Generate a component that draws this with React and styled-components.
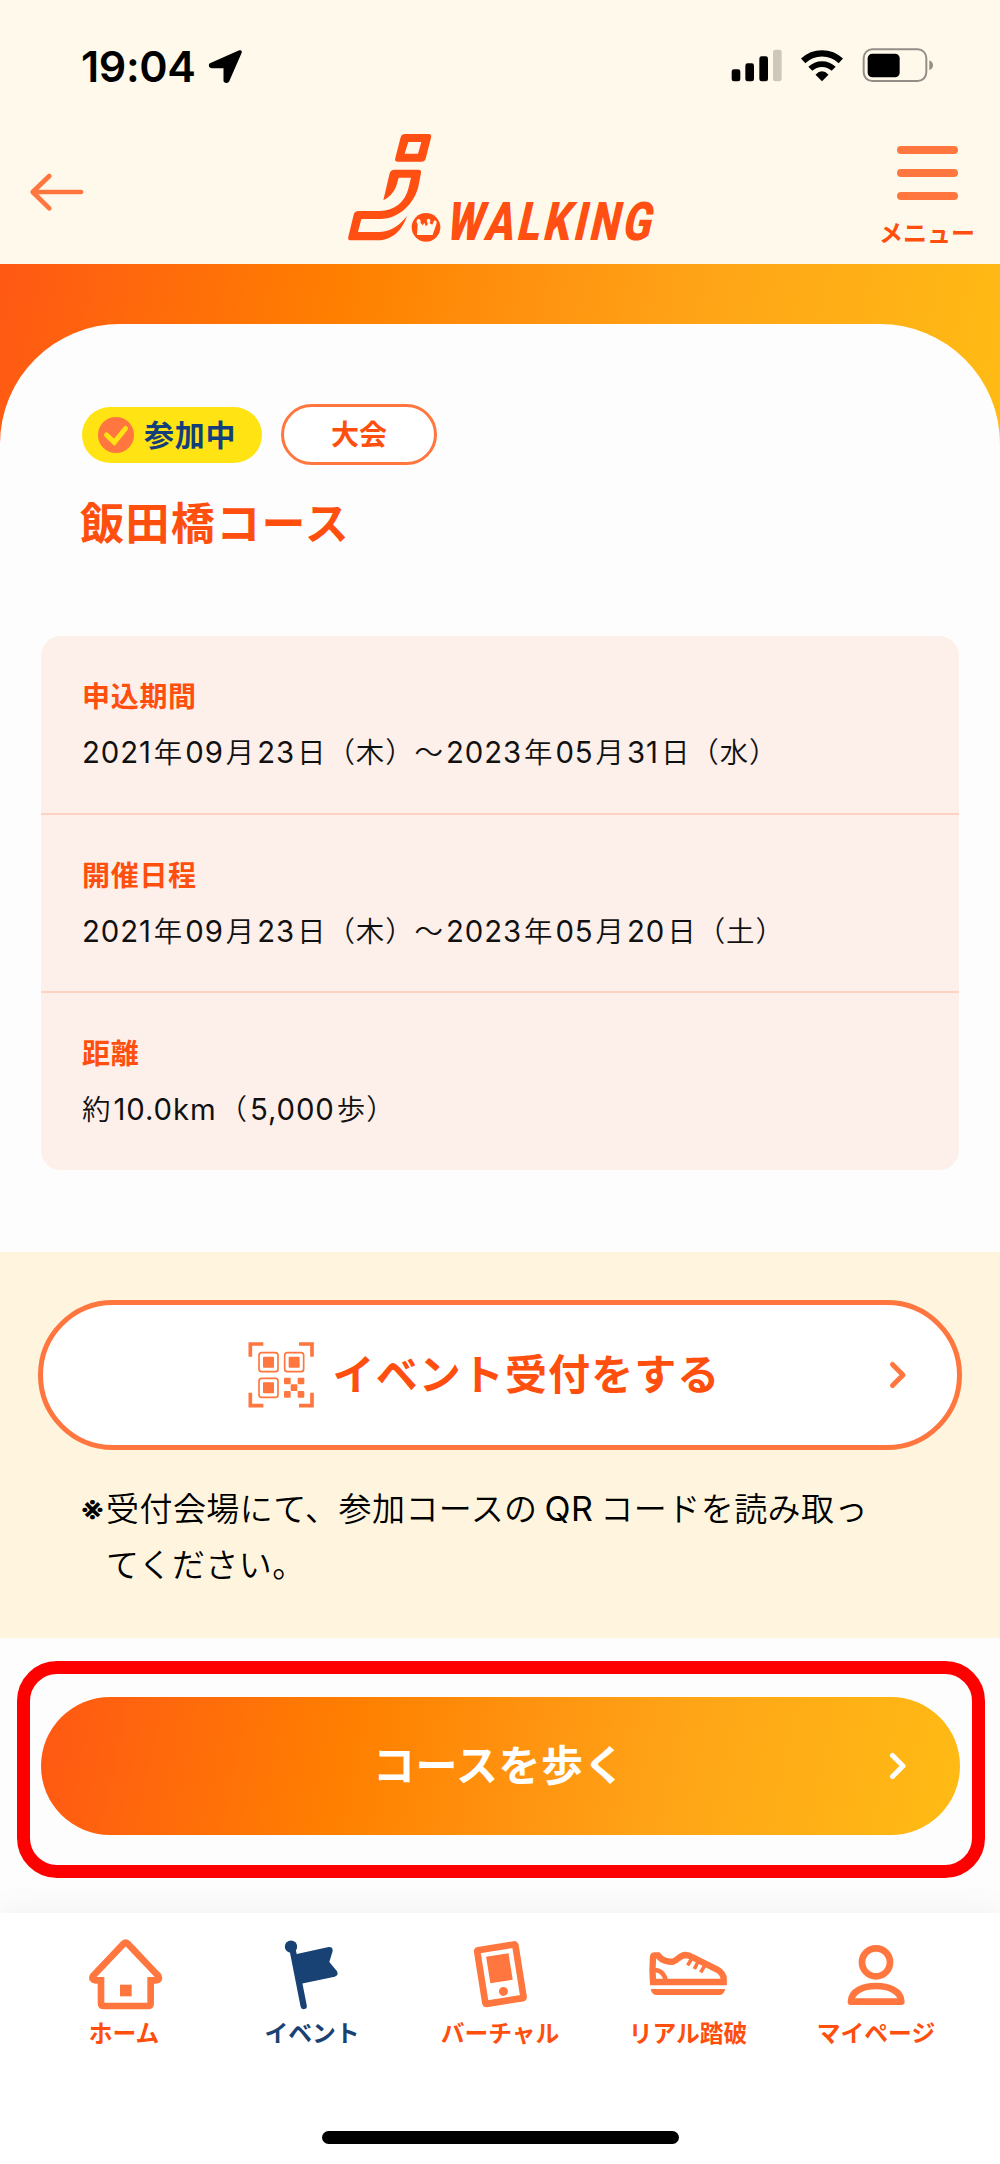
import React from "react";
import styled, { createGlobalStyle } from "styled-components";

const ORANGE = "#ff4f0f";
const SOFT_ORANGE = "#ff763f";
const NAVY = "#184274";
const GRADIENT = "linear-gradient(102deg, #ff5814 0%, #ff8000 34%, #ff9310 52%, #ffa617 70%, #ffbb14 100%)";

const GlobalStyle = createGlobalStyle`
  * { box-sizing: border-box; }
  body {
    margin: 0;
    background: #fdfdfd;
    font-family: Inter, "Noto Sans CJK JP", sans-serif;
    color: #111;
  }
  svg { display: block; flex: none; }
  button { font: inherit; cursor: pointer; }
`;

const Page = styled.div`
  width: 1000px;
  height: 2164px;
  display: flex;
  flex-direction: column;
  overflow: hidden;
`;

const TopArea = styled.div`
  height: 264px;
  flex: none;
  background: #fff9ec;
  display: flex;
  flex-direction: column;
`;

const StatusBar = styled.div`
  height: 132px;
  padding: 0 66px 0 81px;
  display: flex;
  align-items: center;
  justify-content: space-between;
  color: #000;
`;

const StatusGroup = styled.div`
  display: flex;
  align-items: center;
  gap: ${(p) => p.$gap}px;
`;

const Clock = styled.span`
  font-size: 43px;
  font-weight: 600;
  letter-spacing: -0.4px;
  line-height: 50px;
`;

const Header = styled.header`
  height: 132px;
  padding: 0 26px 0 28px;
  display: grid;
  grid-template-columns: 319px 1fr 94px;
`;

const BackButton = styled.button`
  border: 0;
  padding: 0;
  margin-top: 40px;
  width: 57px;
  height: 40px;
  background: none;
`;

const LogoArt = styled.svg`
  overflow: visible;
`;

const LogoText = styled.text`
  font-family: Roboto, sans-serif;
  font-weight: 900;
  font-size: 160px;
  letter-spacing: 13px;
`;

const MenuButton = styled.button`
  border: 0;
  padding: 14px 0 0;
  background: none;
  display: flex;
  flex-direction: column;
  align-items: center;
  color: ${ORANGE};
`;

const MenuLine = styled.span`
  width: 61px;
  height: 8px;
  border-radius: 4px;
  background: ${SOFT_ORANGE};
  margin-bottom: 15px;
`;

const MenuLabel = styled.span`
  font-size: 24px;
  font-weight: 700;
  line-height: 34px;
  margin-top: 2px;
  white-space: nowrap;
`;

const Hero = styled.div`
  height: 186px;
  flex: none;
  padding-top: 60px;
  background: ${GRADIENT};
`;

const HeroPanel = styled.div`
  height: 126px;
  padding: 80px 82px 0;
  border-radius: 120px 120px 0 0;
  background: #fdfdfd;
`;

const BadgeRow = styled.div`
  display: flex;
  align-items: center;
  gap: 19px;
`;

const JoinedBadge = styled.span`
  width: 180px;
  height: 56px;
  padding-left: 16px;
  border-radius: 28px;
  background: #ffe312;
  color: #123f7c;
  display: flex;
  align-items: center;
  gap: 10px;
  font-size: 30px;
  font-weight: 700;
  letter-spacing: 0.8px;
  line-height: 56px;
`;

const TypeBadge = styled.span`
  width: 156px;
  height: 61px;
  border: 3px solid ${SOFT_ORANGE};
  border-radius: 31px;
  background: #fff;
  color: ${ORANGE};
  text-align: center;
  font-size: 28px;
  font-weight: 700;
  line-height: 56px;
`;

const Title = styled.h1`
  margin: 0;
  padding: 44px 80px 0;
  height: 186px;
  flex: none;
  color: ${ORANGE};
  font-size: 44px;
  font-weight: 700;
  letter-spacing: 1.4px;
  line-height: 60px;
`;

const InfoCard = styled.dl`
  margin: 0 41px 82px;
  height: 534px;
  border-radius: 20px;
  background: #fdefea;
  flex: none;
`;

const InfoRow = styled.div`
  height: 178.5px;
  padding: 41px 41px 0;
  border-bottom: 2px solid #ffd1c2;
  &:last-child {
    border-bottom: 0;
  }
`;

const InfoLabel = styled.dt`
  color: ${ORANGE};
  font-size: 28px;
  font-weight: 700;
  letter-spacing: 0.7px;
  line-height: 40px;
`;

const InfoValue = styled.dd`
  margin: 16px 0 0;
  font-size: 28.5px;
  font-weight: 350;
  letter-spacing: 0.9px;
  line-height: 40px;
`;

const Latin = styled.span`
  font-size: 1.03em;
  font-weight: 400;
  margin: 0 ${(p) => p.$gap}px 0 ${(p) => (p.$leading ? 0 : p.$gap)}px;
`;

const Reception = styled.section`
  height: 386px;
  flex: none;
  padding: 48px 38px 0;
  background: #fff5de;
`;

const ActionButton = styled.button`
  width: 100%;
  padding: 0;
  display: grid;
  grid-template-columns: 100px 1fr 100px;
  align-items: center;
  border-radius: 80px;
  font-size: 42px;
  font-weight: 700;
`;

const OutlineButton = styled(ActionButton)`
  height: 150px;
  border: 5.5px solid ${SOFT_ORANGE};
  background: #fff;
  color: ${ORANGE};
`;

const SolidButton = styled(ActionButton)`
  height: 138px;
  border: 0;
  background: ${GRADIENT};
  color: #fff;
`;

const ActionLabel = styled.span`
  grid-column: 2;
  display: flex;
  align-items: center;
  justify-content: center;
  gap: 19px;
  padding-right: ${(p) => p.$shift}px;
  line-height: 60px;
  letter-spacing: ${(p) => p.$tracking}px;
`;

const Note = styled.p`
  margin: 31px 60px 0 42px;
  display: flex;
  color: #000;
  font-size: 33px;
  font-weight: 350;
  letter-spacing: 0.45px;
  line-height: 56px;
`;

const NoteMark = styled.span`
  flex: none;
  width: 26px;
  font-weight: 600;
`;

const NoteLine = styled.span`
  display: block;
  white-space: nowrap;
`;

const Highlight = styled.section`
  height: 217px;
  flex: none;
  margin: 23px 15px 0 17px;
  padding: 23px 12px 0 11px;
  border: 13px solid #ff0000;
  border-radius: 40px;
`;

const TabBar = styled.nav`
  height: 251px;
  flex: none;
  margin-top: 35px;
  background: #fff;
  box-shadow: 0 0 34px rgba(0, 0, 0, 0.06);
  display: flex;
  flex-direction: column;
  align-items: center;
`;

const Tabs = styled.div`
  width: 940px;
  height: 218px;
  padding-top: 23px;
  display: grid;
  grid-template-columns: repeat(5, 1fr);
`;

const Tab = styled.div`
  display: flex;
  flex-direction: column;
  align-items: center;
  color: ${(p) => (p.$active ? NAVY : ORANGE)};
`;

const TabLabel = styled.span`
  margin-top: 5px;
  font-size: 23.8px;
  font-weight: 700;
  line-height: 34px;
  white-space: nowrap;
`;

const HomeIndicator = styled.div`
  width: 357px;
  height: 13px;
  border-radius: 7px;
  background: #000;
`;

const LocationArrow = () => (
  <svg width="35" height="35" viewBox="624 148 105 105">
    <path d="M720 157L632 196Q632 200 636 200H676V243Q680 247 683 242Z" stroke="#000" strokeWidth="11" strokeLinejoin="round" />
  </svg>
);

const StatusIcons = () => (
  <svg width="203" height="36" viewBox="692 146 609 108">
    <rect x="694" y="210" width="26" height="36" rx="7" />
    <rect x="735" y="192" width="26" height="54" rx="7" />
    <rect x="777" y="171" width="26" height="75" rx="7" />
    <rect x="818" y="151" width="26" height="95" rx="7" fill="#cdc8bb" />
    <path d="M908.500 184.500A82 82 0 0 1 1021.500 184.500" fill="none" stroke="#000" strokeWidth="19" />
    <path d="M930 208.500A50 50 0 0 1 1000 208.500" fill="none" stroke="#000" strokeWidth="17" />
    <path d="M965 246L945.500 226Q965 206 984.500 226Z" />
    <rect x="1090" y="150" width="188" height="95" rx="26" fill="none" stroke="#928e86" strokeWidth="6" />
    <rect x="1102" y="163" width="96" height="71" rx="14" />
    <path d="M1287 183Q1298 188 1298 198T1287 213Z" fill="#928e86" />
  </svg>
);

const BackArrow = () => (
  <svg width="57" height="40" viewBox="84 516 171 120" fill="none" stroke={SOFT_ORANGE} strokeWidth="14" strokeLinecap="round" strokeLinejoin="round">
    <path d="M243 576H100M148 528L98 576L148 625" />
  </svg>
);

const Logo = () => (
  <LogoArt width="308.300" height="110" viewBox="1040 395 925 330" fill="#ff4f12">
    <path fillRule="evenodd" d="M1214 401H1284Q1295 401 1292 412L1276 475Q1273 484 1264 484H1192Q1182 484 1185 473L1201 411Q1204 401 1214 401ZM1224 425L1213 460H1253L1263 425Z" />
    <path d="M1149 600L1168 519Q1171 508 1182 508H1253Q1264 508 1262 518L1255 555C1243 610 1196 656 1140 656H1083L1073 695H1138C1174 694 1200 672 1220 647C1207 685 1181 719 1133 720H1052Q1041 720 1044 709L1060 643Q1063 632 1074 632H1138C1183 631 1214 604 1224 565L1232 532H1195L1187 560Q1175 587 1149 600Z" />
    <circle cx="1277" cy="681" r="43" />
    <path d="M1250 704L1252 672Q1245 662 1253 656Q1262 655 1261 668L1267 675L1272 667L1277 678L1283 671Q1275 658 1284 655Q1294 656 1288 669L1296 673L1301 661Q1312 659 1308 672L1297 704Z" fill="#fff9ec" />
    <LogoText transform="translate(1333 720) skewX(-13) scale(0.786 1)" x="0" y="0">WALKING</LogoText>
  </LogoArt>
);

const CheckIcon = () => (
  <svg width="36" height="36" viewBox="0 0 36 36">
    <circle cx="18" cy="18" r="18" fill={SOFT_ORANGE} />
    <path d="M8.500 18L16.300 25.300L27.500 11.500" fill="none" stroke="#ffe312" strokeWidth="5" strokeLinecap="round" />
  </svg>
);

const QrIcon = () => (
  <svg width="66" height="66" viewBox="741 307 198 198" fill={SOFT_ORANGE}>
    <path d="M787 313H748V351M894 313H933V351M748 459V498H787M933 459V498H894" fill="none" stroke={SOFT_ORANGE} strokeWidth="11" />
    {[[772, 337], [849, 337], [772, 414]].map(([x, y]) => (
      <g key={`${x}-${y}`}>
        <rect x={x + 2} y={y + 2} width="57" height="57" rx="8" fill="none" stroke={SOFT_ORANGE} strokeWidth="5" />
        <rect x={x + 14} y={y + 14} width="33" height="33" rx="3" />
      </g>
    ))}
    {[[849, 414], [890, 414], [869, 434], [849, 454], [890, 454]].map(([x, y]) => (
      <rect key={`${x}-${y}`} x={x} y={y} width="20" height="20" rx="3" />
    ))}
  </svg>
);

const Chevron = () => (
  <svg width="20" height="30" viewBox="0 0 20 30" fill="none" stroke="currentColor" strokeWidth="5" strokeLinecap="round" strokeLinejoin="round">
    <path d="M4.500 4.500L15 15L4.500 25.500" />
  </svg>
);

const ChevronSlot = styled.span`
  grid-column: 3;
  color: ${(p) => p.$color};
  padding-left: ${(p) => p.$inset}px;
`;

const HomeIcon = () => (
  <svg width="80" height="76" viewBox="252 138 240 228">
    <path d="M371 161Q377 155 383 161L475 258Q481 270 468 271H452V340Q452 348 444 348H311Q303 348 303 340V271H287Q273 270 279 258Z" fill="none" stroke={SOFT_ORANGE} strokeWidth="20" />
    <rect x="360" y="284" width="35" height="35" fill={SOFT_ORANGE} />
  </svg>
);

const FlagIcon = () => (
  <svg width="80" height="76" viewBox="816 138 240 228" fill={NAVY}>
    <circle cx="873" cy="170" r="18.500" />
    <path d="M878 180L911 348" stroke={NAVY} strokeWidth="19" strokeLinecap="round" />
    <path d="M880 194L986 171Q999 170 998 183L988 216L1011 244Q1017 257 1004 260L900 282Z" />
  </svg>
);

const TabletIcon = () => (
  <svg width="80" height="76" viewBox="1380 138 240 228" fill={SOFT_ORANGE}>
    <g transform="rotate(-9 1501 252)">
      <rect x="1443" y="171" width="116" height="163" rx="3" fill="none" stroke={SOFT_ORANGE} strokeWidth="20" strokeLinejoin="round" />
      <rect x="1467" y="194" width="68" height="81" />
      <circle cx="1502" cy="305" r="13.500" />
    </g>
  </svg>
);

const ShoeIcon = () => (
  <svg width="80" height="76" viewBox="444 138 240 228" fill="none" stroke={SOFT_ORANGE}>
    <path d="M459 202Q459 196 465 196H474C485 212 505 218 521 214C534 210 539 196 556 195Q567 195 578 202L650 238Q671 250 671 268V276H459Q456 240 459 202Z" strokeWidth="19" />
    <path d="M462 240Q490 240 498 272" strokeWidth="13" />
    <path d="M575 206L563 226M594 216L583 237M614 227L602 247" strokeWidth="11" />
    <path d="M452 297H676Q671 315 658 315H470Q456 315 452 297Z" fill={SOFT_ORANGE} stroke="none" />
  </svg>
);

const PersonIcon = () => (
  <svg width="80" height="76" viewBox="1009 138 240 228" fill="none" stroke={SOFT_ORANGE} strokeWidth="20" strokeLinejoin="round">
    <circle cx="1129" cy="217" r="42" />
    <path d="M1054 335C1055 302 1092 288 1129 288S1204 302 1205 335Z" />
  </svg>
);

const INFO = [
  ["申込期間", "2021年09月23日（木）～2023年05月31日（水）"],
  ["開催日程", "2021年09月23日（木）～2023年05月20日（土）"],
  ["距離", "約10.0km（5,000歩）"],
];

const TABS = [
  ["ホーム", HomeIcon],
  ["イベント", FlagIcon, true],
  ["バーチャル", TabletIcon],
  ["リアル踏破", ShoeIcon],
  ["マイページ", PersonIcon],
];

// Gives runs of latin letters and digits their own weight and side spacing.
const MixedText = ({ text, gap }) =>
  text
    .split(/([!-~]+)/)
    .filter(Boolean)
    .map((run, i) =>
      /^[!-~]/.test(run) ? <Latin key={i} $gap={gap} $leading={i === 0}>{run}</Latin> : run
    );

export default function App() {
  return (
    <Page lang="ja">
      <GlobalStyle />
      <TopArea>
        <StatusBar>
          <StatusGroup $gap={13}>
            <Clock>19:04</Clock>
            <LocationArrow />
          </StatusGroup>
          <StatusIcons />
        </StatusBar>
        <Header>
          <BackButton aria-label="戻る"><BackArrow /></BackButton>
          <Logo />
          <MenuButton>
            <MenuLine />
            <MenuLine />
            <MenuLine />
            <MenuLabel>メニュー</MenuLabel>
          </MenuButton>
        </Header>
      </TopArea>

      <Hero>
        <HeroPanel>
          <BadgeRow>
            <JoinedBadge><CheckIcon />参加中</JoinedBadge>
            <TypeBadge>大会</TypeBadge>
          </BadgeRow>
        </HeroPanel>
      </Hero>
      <Title>飯田橋コース</Title>

      <InfoCard>
        {INFO.map(([label, value]) => (
          <InfoRow key={label}>
            <InfoLabel>{label}</InfoLabel>
            <InfoValue><MixedText text={value} gap={2} /></InfoValue>
          </InfoRow>
        ))}
      </InfoCard>

      <Reception>
        <OutlineButton>
          <ActionLabel $tracking={1.1} $shift={32}><QrIcon />イベント受付をする</ActionLabel>
          <ChevronSlot $color={SOFT_ORANGE} $inset={31}><Chevron /></ChevronSlot>
        </OutlineButton>
        <Note>
          <NoteMark>※</NoteMark>
          <span>
            <NoteLine><MixedText text="受付会場にて、参加コースのQRコードを読み取っ" gap={7} /></NoteLine>
            <NoteLine>てください。</NoteLine>
          </span>
        </Note>
      </Reception>

      <Highlight>
        <SolidButton>
          <ActionLabel $tracking={0.5} $shift={2}>コースを歩く</ActionLabel>
          <ChevronSlot $color="#fff" $inset={28}><Chevron /></ChevronSlot>
        </SolidButton>
      </Highlight>

      <TabBar>
        <Tabs>
          {TABS.map(([label, Icon, active]) => (
            <Tab key={label} $active={active}>
              <Icon />
              <TabLabel>{label}</TabLabel>
            </Tab>
          ))}
        </Tabs>
        <HomeIndicator />
      </TabBar>
    </Page>
  );
}
